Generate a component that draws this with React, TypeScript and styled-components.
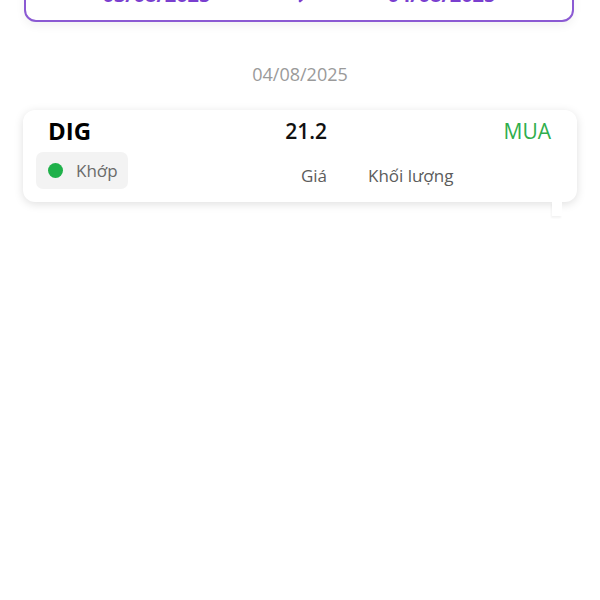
import React from "react";
import styled, { createGlobalStyle } from "styled-components";

const Global = createGlobalStyle`
  html, body { margin: 0; padding: 0; background: #ffffff; }
  body { font-family: "Open Sans", "Noto Sans", sans-serif; overflow: hidden; }
`;

const Page = styled.div`
  width: 600px;
  height: 600px;
  display: flex;
  flex-direction: column;
  overflow: hidden;
`;

const RangeCard = styled.div`
  margin: -36px 26px 0 24px;
  height: 58px;
  box-sizing: border-box;
  border: 2px solid #8b5ad3;
  border-radius: 12px;
  background: #fff;
  box-shadow: 0 4px 10px rgba(0, 0, 0, 0.05);
  display: grid;
  grid-template-columns: 1fr auto 1fr;
  align-items: end;
  padding: 0 0 13px 0;
`;

const RangeDate = styled.div`
  text-align: center;
  color: #7a3fcf;
  font-size: 20px;
  font-weight: 700;
  line-height: 24px;
`;

const Arrow = styled.svg`
  width: 14px;
  height: 18px;
  margin: 0 0 4px 10px;
`;

const DayLabel = styled.div`
  margin-top: 39px;
  text-align: center;
  color: #9a9a9a;
  font-size: 18px;
  line-height: 26px;
`;

const Card = styled.div`
  position: relative;
  margin: 23px 23px 0 23px;
  background: #fff;
  border-radius: 12px;
  box-shadow: 0 2px 10px rgba(0, 0, 0, 0.13);
  padding: 5px 26px 13px 13px;
  display: grid;
  grid-template-columns: 231px 60px 143px 1fr;
  grid-template-rows: 32px 37px;
  row-gap: 5px;
`;

const Tail = styled.div`
  position: absolute;
  right: 15px;
  top: 100%;
  width: 10px;
  height: 14px;
  background: #fff;
  box-shadow: -1px 2px 2px rgba(0, 0, 0, 0.05);
`;

const Symbol = styled.div`
  padding-left: 12px;
  font-size: 24px;
  font-weight: 700;
  color: #000;
  line-height: 32px;
`;

const Price = styled.div`
  text-align: right;
  font-size: 21px;
  font-weight: 600;
  color: #111;
  line-height: 32px;
`;

const Side = styled.div`
  grid-column: 4;
  text-align: right;
  font-size: 21px;
  color: #2fae4c;
  line-height: 32px;
`;

const Status = styled.div`
  justify-self: start;
  display: flex;
  align-items: center;
  gap: 13px;
  background: #f3f3f3;
  border-radius: 7px;
  padding: 0 12px;
  width: 92px;
  box-sizing: border-box;
  height: 37px;
  font-size: 17px;
  color: #6a6a6a;
`;

const Dot = styled.span`
  width: 15px;
  height: 15px;
  border-radius: 50%;
  background: #1fb14a;
  flex: none;
`;

const ColLabel = styled.div<{ $align: "left" | "right"; $pad?: number }>`
  align-self: end;
  text-align: ${(p) => p.$align};
  padding-left: ${(p) => p.$pad ?? 0}px;
  font-size: 17px;
  color: #5c5c5c;
  line-height: 24px;
  margin-bottom: 1px;
`;

export default function App() {
  return (
    <Page>
      <Global />
      <RangeCard>
        <RangeDate>03/08/2025</RangeDate>
        <Arrow viewBox="0 0 14 18">
          <path d="M3 2 L11 9 L3 16" fill="none" stroke="#7a3fcf" strokeWidth="2.6" strokeLinecap="round" strokeLinejoin="round" />
        </Arrow>
        <RangeDate>04/08/2025</RangeDate>
      </RangeCard>
      <DayLabel>04/08/2025</DayLabel>
      <Card>
        <Symbol>DIG</Symbol>
        <Price>21.2</Price>
        <Side>MUA</Side>
        <Status>
          <Dot />
          Khớp
        </Status>
        <ColLabel $align="right">Giá</ColLabel>
        <ColLabel $align="left" $pad={41}>Khối lượng</ColLabel>
        <Tail />
      </Card>
    </Page>
  );
}
